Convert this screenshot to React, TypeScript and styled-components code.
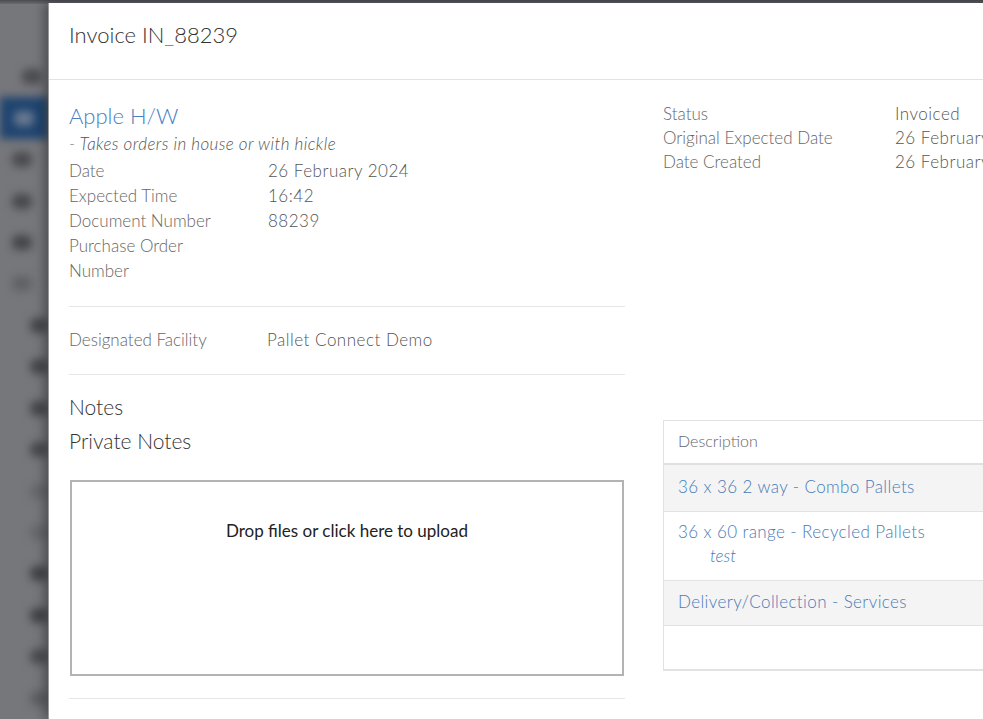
import React from "react";
import styled, { createGlobalStyle } from "styled-components";

const Global = createGlobalStyle`
  html, body { margin: 0; padding: 0; }
  body {
    width: 983px;
    height: 719px;
    overflow: hidden;
    background: #76777b;
    font-family: Lato, "Open Sans", sans-serif;
  }
`;

const Page = styled.div`
  position: relative;
  display: flex;
  width: 983px;
  height: 719px;
  overflow: hidden;
  background: #76777b;
`;

const TopShade = styled.div`
  position: absolute;
  left: 0;
  top: 0;
  right: 0;
  height: 4px;
  background: linear-gradient(#4a4b4e, #6a6b6e);
  z-index: 1;
`;

const Sidebar = styled.div`
  width: 48px;
  flex: 0 0 48px;
  display: flex;
  flex-direction: column;
  padding-top: 56px;
  filter: blur(4px);
`;

const NavItem = styled.div<{ $active?: boolean }>`
  height: 42px;
  display: flex;
  align-items: center;
  padding-left: 12px;
  background: ${(p) => (p.$active ? "#1f4470" : "transparent")};
`;

const NavBlob = styled.div<{ $o: number; $x: number }>`
  width: 20px;
  height: 15px;
  margin-left: ${(p) => p.$x}px;
  border-radius: 6px;
  background: ${(p) => (p.$o > 0 ? "#38393c" : "#9a9ca4")};
  opacity: ${(p) => Math.abs(p.$o)};
`;

const Modal = styled.div`
  position: relative;
  z-index: 2;
  margin-top: 3px;
  width: 1000px;
  flex: 0 0 1000px;
  background: #fff;
  box-shadow: -4px 0 10px rgba(0, 0, 0, 0.35);
  border-left: 1px solid #999;
`;

const Header = styled.div`
  height: 77px;
  box-sizing: border-box;
  padding: 18px 20px 0;
  border-bottom: 1px solid #e3e3e3;
  font-size: 22px;
  font-weight: 300;
  color: #333;
`;

const Body = styled.div`
  display: flex;
  padding: 22px 20px 0;
`;

const LeftCol = styled.div`
  width: 556px;
  flex: 0 0 556px;
`;

const RightCol = styled.div`
  margin-left: 38px;
  flex: 1;
  display: flex;
  flex-direction: column;
`;

const CustomerLink = styled.a`
  display: block;
  font-size: 22px;
  font-weight: 300;
  color: #4a80c2;
  text-decoration: none;
  line-height: 28px;
`;

const Tagline = styled.div`
  font-style: italic;
  font-size: 17px;
  font-weight: 300;
  letter-spacing: 0.4px;
  color: #555;
  line-height: 28px;
`;

const InfoGrid = styled.div<{ $label: number; $lh: number }>`
  display: grid;
  grid-template-columns: ${(p) => p.$label}px 1fr;
  font-size: 17px;
  line-height: ${(p) => p.$lh}px;
`;

const Label = styled.div`
  color: #666;
  font-weight: 300;
  padding-right: 30px;
`;

const Value = styled.div`
  color: #555;
  font-weight: 300;
  letter-spacing: 0.5px;
  white-space: nowrap;
`;

const Rule = styled.hr`
  border: 0;
  border-top: 1px solid #e6e6e6;
  margin: 0;
`;

const Section = styled.div<{ $pad: string }>`
  padding: ${(p) => p.$pad};
`;

const Heading = styled.div`
  font-size: 21px;
  font-weight: 300;
  color: #333;
  line-height: 34px;
`;

const DropZone = styled.div`
  margin: 22px 1px 22px 1px;
  height: 196px;
  box-sizing: border-box;
  border: 2px solid #b3b3b3;
  display: flex;
  justify-content: center;
  align-items: flex-start;
  padding-top: 39px;
  font-size: 17px;
  line-height: 20px;
  color: #222;
`;

const CutText = styled.div`
  padding-top: 16px;
  font-size: 17px;
  font-weight: 300;
  color: #333;
`;

const Table = styled.div`
  margin-top: 246px;
  border: 1px solid #e2e2e2;
  border-right: 0;
`;

const THead = styled.div`
  height: 44px;
  box-sizing: border-box;
  padding: 10px 14px 0;
  font-size: 16px;
  line-height: 20px;
  font-weight: 300;
  color: #666;
  border-bottom: 2px solid #e0e0e0;
`;

const TRow = styled.div<{ $shade?: boolean; $h: number; $pt: number }>`
  height: ${(p) => p.$h}px;
  box-sizing: border-box;
  padding: ${(p) => p.$pt}px 14px 0;
  background: ${(p) => (p.$shade ? "#f4f4f4" : "#fff")};
  border-bottom: 1px solid #e2e2e2;
  font-size: 17px;
  line-height: 24px;
`;

const RowLink = styled.a`
  color: #4a7ab8;
  font-weight: 300;
  letter-spacing: 0.4px;
  text-decoration: none;
  display: block;
  white-space: nowrap;
`;

const RowNote = styled.div`
  color: #4a7ab8;
  font-style: italic;
  font-weight: 300;
  padding-left: 32px;
`;

const nav: Array<[number, number, boolean?]> = [
  [0.7, 10],
  [-0.6, 2, true],
  [0.7, 0],
  [0.75, 0],
  [0.8, 0],
  [0.35, 0],
  [0.8, 18],
  [0.8, 18],
  [0.8, 18],
  [0.75, 18],
  [0.25, 18],
  [0.25, 18],
  [0.85, 18],
  [0.85, 18],
  [0.7, 18],
  [0.4, 18],
];

export default function App() {
  return (
    <Page>
      <Global />
      <TopShade />
      <Sidebar>
        {nav.map(([o, x, a], i) => (
          <NavItem key={i} $active={a}>
            <NavBlob $o={o} $x={x} />
          </NavItem>
        ))}
      </Sidebar>
      <Modal>
        <Header>Invoice IN_88239</Header>
        <Body>
          <LeftCol>
            <Section $pad="0 0 23px">
              <CustomerLink href="#">Apple H/W</CustomerLink>
              <Tagline>- Takes orders in house or with hickle</Tagline>
              <InfoGrid $label={199} $lh={25}>
                <Label>Date</Label>
                <Value>26 February 2024</Value>
                <Label>Expected Time</Label>
                <Value>16:42</Value>
                <Label>Document Number</Label>
                <Value>88239</Value>
                <Label>Purchase Order Number</Label>
                <Value></Value>
              </InfoGrid>
            </Section>
            <Rule />
            <Section $pad="20px 0 22px">
              <InfoGrid $label={198} $lh={25}>
                <Label>Designated Facility</Label>
                <Value>Pallet Connect Demo</Value>
              </InfoGrid>
            </Section>
            <Rule />
            <Section $pad="15px 0 0">
              <Heading>Notes</Heading>
              <Heading>Private Notes</Heading>
              <DropZone>Drop files or click here to upload</DropZone>
            </Section>
            <Rule />
            <CutText>Additional Files</CutText>
          </LeftCol>
          <RightCol>
            <InfoGrid $label={232} $lh={24}>
              <Label>Status</Label>
              <Value>Invoiced</Value>
              <Label>Original Expected Date</Label>
              <Value>26 February 2024</Value>
              <Label>Date Created</Label>
              <Value>26 February 2024</Value>
            </InfoGrid>
            <Table>
              <THead>Description</THead>
              <TRow $shade $h={47} $pt={10}>
                <RowLink href="#">36 x 36 2 way - Combo Pallets</RowLink>
              </TRow>
              <TRow $h={69} $pt={8}>
                <RowLink href="#">36 x 60 range - Recycled Pallets</RowLink>
                <RowNote>test</RowNote>
              </TRow>
              <TRow $shade $h={45} $pt={9}>
                <RowLink href="#">Delivery/Collection - Services</RowLink>
              </TRow>
              <TRow $h={44} $pt={0} />
            </Table>
          </RightCol>
        </Body>
      </Modal>
    </Page>
  );
}
